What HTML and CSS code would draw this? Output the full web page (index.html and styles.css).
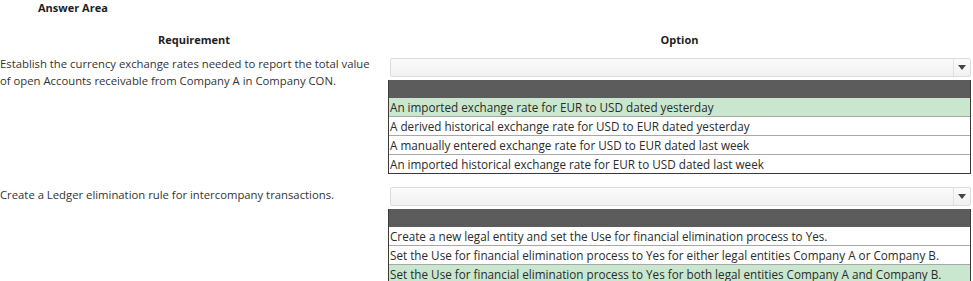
FILE: index.html
```html
<!DOCTYPE html>
<html>
<head>
<meta charset="utf-8">
<link rel="stylesheet" href="styles.css">
</head>
<body>
<div class="page">
  <div class="title">Answer Area</div>
  <div class="grid">
    <div class="head">Requirement</div>
    <div class="head">Option</div>

    <div class="req">Establish the currency exchange rates needed to report the total value of open Accounts receivable from Company A in Company CON.</div>
    <div class="opt">
      <div class="select"><span class="arrow"><svg width="8" height="5" viewBox="0 0 8 5"><path d="M0 0H8L4 5Z" fill="#444"/></svg></span></div>
      <div class="list">
        <div class="list-head"></div>
        <div class="item sel">An imported exchange rate for EUR to USD dated yesterday</div>
        <div class="item">A derived historical exchange rate for USD to EUR dated yesterday</div>
        <div class="item">A manually entered exchange rate for USD to EUR dated last week</div>
        <div class="item">An imported historical exchange rate for EUR to USD dated last week</div>
      </div>
    </div>

    <div class="req req2">Create a Ledger elimination rule for intercompany transactions.</div>
    <div class="opt opt2">
      <div class="select"><span class="arrow"><svg width="8" height="5" viewBox="0 0 8 5"><path d="M0 0H8L4 5Z" fill="#444"/></svg></span></div>
      <div class="list">
        <div class="list-head"></div>
        <div class="item">Create a new legal entity and set the Use for financial elimination process to Yes.</div>
        <div class="item">Set the Use for financial elimination process to Yes for either legal entities Company A or Company B.</div>
        <div class="item sel">Set the Use for financial elimination process to Yes for both legal entities Company A and Company B.</div>
      </div>
    </div>
  </div>
</div>
</body>
</html>
```

FILE: styles.css
```css
html, body {
  margin: 0;
  padding: 0;
  background: #fff;
}
.page {
  font-family: "Open Sans", "Noto Sans", sans-serif;
  color: #2a2a2a;
  width: 973px;
  height: 281px;
  overflow: hidden;
}
.title {
  font-weight: bold;
  font-size: 11px;
  padding: 1px 0 0 38px;
  height: 16px;
  line-height: 14px;
  color: #1e1e1e;
}
.grid {
  display: grid;
  grid-template-columns: 388px 583px;
  margin-top: 15px;
}
.head {
  font-weight: bold;
  font-size: 11px;
  text-align: center;
  line-height: 14px;
  height: 22px;
  padding-top: 1px;
  color: #1e1e1e;
}
.req {
  font-size: 11.3px;
  line-height: 17px;
  color: #333;
  padding-right: 12px;
}
.req2 {
  padding-top: 2px;
}
.opt {
  padding-top: 3px;
  padding-bottom: 10px;
}
.opt2 {
  padding-bottom: 0;
}
.select {
  height: 17px;
  margin-left: 2px;
  border: 1px solid #dcdcdc;
  border-radius: 2px;
  background: linear-gradient(#fbfbfb, #f1f1f1);
  display: flex;
  justify-content: flex-end;
}
.arrow {
  width: 16px;
  border-left: 1px solid #e2e2e2;
  display: flex;
  align-items: center;
  justify-content: center;
}
.list {
  margin-top: 3px;
  border: 1px solid #3a3a3a;
  border-top: none;
}
.list-head {
  height: 18px;
  background: #5c5c5c;
}
.item {
  font-size: 11.7px;
  line-height: 18px;
  padding-left: 1px;
  border-top: 1px solid #a8a8a8;
  color: #2b2b2b;
  white-space: nowrap;
}
.list-head + .item {
  border-top: none;
}
.item.sel {
  background: #c9e7cf;
}
```
